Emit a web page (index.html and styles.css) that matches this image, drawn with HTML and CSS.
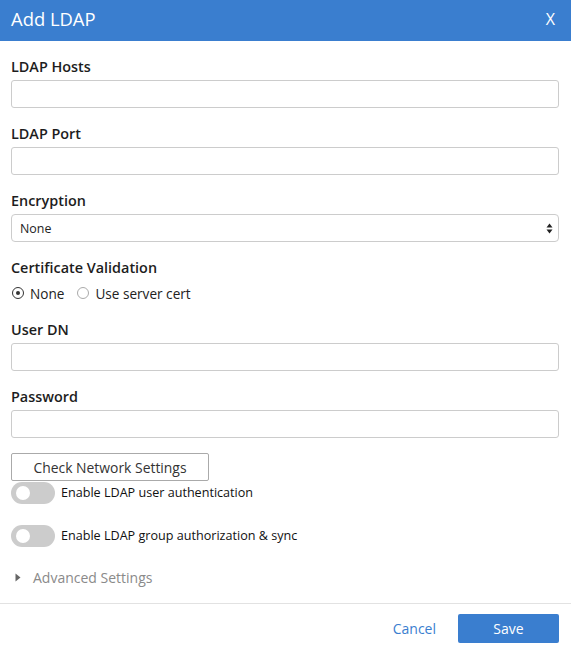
FILE: index.html
```html
<!DOCTYPE html>
<html>
<head>
<meta charset="utf-8">
<link rel="stylesheet" href="styles.css">
</head>
<body>
<div class="modal">
  <div class="header">
    <span class="title">Add LDAP</span>
    <span class="close">X</span>
  </div>
  <div class="body">
    <div class="field">
      <label class="label">LDAP Hosts</label>
      <input class="input" type="text">
    </div>
    <div class="field">
      <label class="label">LDAP Port</label>
      <input class="input" type="text">
    </div>
    <div class="field">
      <label class="label">Encryption</label>
      <div class="select">
        <span>None</span>
        <svg class="arrows" width="7" height="11" viewBox="0 0 7 11"><path d="M3.5 0.5 L6.5 4.5 H0.5 Z M3.5 10.5 L6.5 6.5 H0.5 Z" fill="#222"/></svg>
      </div>
    </div>
    <div class="field radio-field">
      <label class="label">Certificate Validation</label>
      <div class="radios">
        <span class="radio checked"></span><span class="rtext">None</span>
        <span class="radio"></span><span class="rtext">Use server cert</span>
      </div>
    </div>
    <div class="field">
      <label class="label">User DN</label>
      <input class="input" type="text">
    </div>
    <div class="field">
      <label class="label">Password</label>
      <input class="input" type="password">
    </div>
    <button class="check">Check Network Settings</button>
    <div class="toggle-row first">
      <span class="toggle"><span class="knob"></span></span>
      <span class="ttext">Enable LDAP user authentication</span>
    </div>
    <div class="toggle-row second">
      <span class="toggle"><span class="knob"></span></span>
      <span class="ttext">Enable LDAP group authorization &amp; sync</span>
    </div>
    <div class="advanced">
      <svg width="6" height="9" viewBox="0 0 6 9"><path d="M0.5 0.5 L5.5 4.5 L0.5 8.5 Z" fill="#666"/></svg>
      <span>Advanced Settings</span>
    </div>
  </div>
  <div class="footer">
    <span class="cancel">Cancel</span>
    <button class="save">Save</button>
  </div>
</div>
</body>
</html>
```
FILE: styles.css
```css
* { box-sizing: border-box; }
html, body { margin: 0; padding: 0; background: #fff; }
body { font-family: "Open Sans", "Noto Sans", sans-serif; color: #222; width: 571px; height: 651px; overflow: hidden; }

.header {
  height: 41px;
  background: #3a7ecf;
  color: #fff;
  display: flex;
  align-items: center;
  justify-content: space-between;
  padding: 0 16px 0 11px;
}
.title { font-size: 18.4px; line-height: 24px; margin-top: -3px; }
.close { font-size: 16px; margin-top: -4px; }

.body { padding: 16px 12px 0 11px; }
.field { display: flex; flex-direction: column; margin-bottom: 16px; }
.label { font-size: 14.4px; line-height: 20px; font-weight: 600; margin-bottom: 3px; color: #1d1d1d; }
.input {
  height: 28px;
  border: 1px solid #ccc;
  border-radius: 3px;
  font: inherit;
  outline: none;
}
.select {
  height: 28px;
  border: 1px solid #ccc;
  border-radius: 4px;
  display: flex;
  align-items: center;
  justify-content: space-between;
  padding: 0 5px 0 8px;
  font-size: 12.4px;
  color: #222;
}
.arrows { margin-top: 1px; }

.radio-field { margin-bottom: 17px; }
.radios { display: flex; align-items: center; height: 20px; margin-top: 2px; font-size: 13.6px; color: #222; }
.radio {
  width: 12px; height: 12px;
  border: 1px solid #aaa;
  border-radius: 50%;
  display: inline-flex;
  align-items: center;
  justify-content: center;
  margin: 0 6px 0 1px;
}
.radio.checked { border: 1.5px solid #333; }
.radio.checked::after { content: ""; width: 4px; height: 4px; border-radius: 50%; background: #333; }
.rtext { margin-right: 12px; }

.check {
  display: block;
  width: 198px;
  height: 28px;
  margin-top: -1px;
  border: 1px solid #aaa;
  border-radius: 2px;
  background: #fff;
  font-family: inherit;
  font-size: 13.9px;
  color: #333;
  padding: 0;
}
.toggle-row { display: flex; align-items: center; height: 22px; }
.toggle-row.first { margin-top: 1px; }
.toggle-row.second { margin-top: 21px; }
.toggle {
  width: 44px; height: 22px;
  border-radius: 11px;
  background: #ccc;
  position: relative;
  margin-right: 6px;
}
.knob {
  position: absolute;
  left: 5px; top: 4px;
  width: 14px; height: 14px;
  border-radius: 50%;
  background: #fff;
}
.ttext { font-size: 12.6px; color: #111; margin-top: -1px; }

.advanced {
  display: flex;
  align-items: center;
  margin-top: 20px;
  height: 20px;
  padding-left: 4px;
  font-size: 14px;
  color: #8a8a8a;
}
.advanced svg { margin-right: 12px; }

.footer {
  margin-top: 16px;
  border-top: 1px solid #e2e2e2;
  display: flex;
  justify-content: flex-end;
  align-items: center;
  padding: 10px 12px 0 0;
}
.cancel { color: #3a7ecf; font-size: 14px; margin-right: 22px; }
.save {
  width: 101px; height: 29px;
  background: #3a7ecf;
  color: #fff;
  border: none;
  border-radius: 2px;
  font-family: inherit;
  font-size: 14px;
}
```
